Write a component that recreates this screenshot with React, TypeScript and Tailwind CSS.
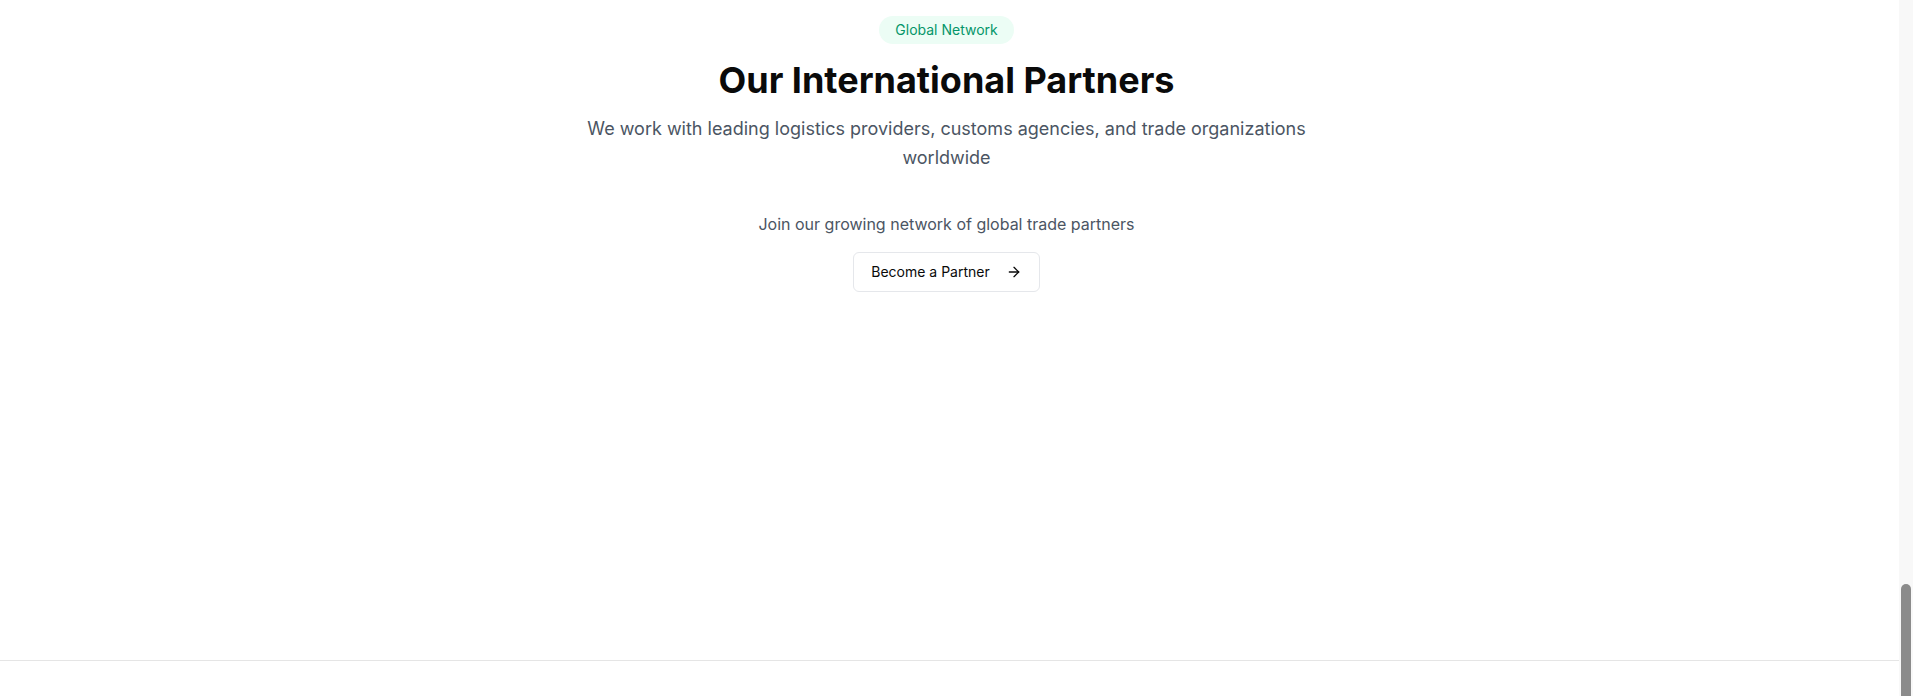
import React from 'react';
import { ArrowRight } from 'lucide-react';

const App: React.FC = () => {
  return (
    <div className="flex h-[696px] w-full overflow-hidden bg-white font-['Inter',sans-serif]">
      <div className="flex flex-1 flex-col">
        <section className="flex h-[660px] flex-col items-center pt-4 pr-[6px] text-center">
          <span className="mb-4 rounded-full bg-[#ecfdf5] px-4 py-1 text-sm text-[#059669]">
            Global Network
          </span>
          <h2 className="mb-[14px] text-4xl font-bold text-[#0a0a0a]">Our International Partners</h2>
          <p className="max-w-3xl text-lg leading-relaxed text-[#4b5563]">
            We work with leading logistics providers, customs agencies, and trade organizations worldwide
          </p>

          <p className="mt-[39px] mb-4 text-base text-[#4b5563]">Join our growing network of global trade partners</p>
          <button className="flex h-10 items-center gap-4 rounded-md border border-[#e5e7eb] bg-white px-[17px] text-sm text-[#0a0a0a]">
            Become a Partner
            <ArrowRight size={16} />
          </button>
        </section>
        <footer className="flex-1 border-t border-[#e5e5e5]" />
      </div>

      {/* fake scrollbar */}
      <div className="flex w-[14px] flex-col justify-end bg-[#f8f8f8] px-[2px]">
        <div className="h-[112px] rounded-t-full bg-[#8b8b8b]" />
      </div>
    </div>
  );
};

export default App;
